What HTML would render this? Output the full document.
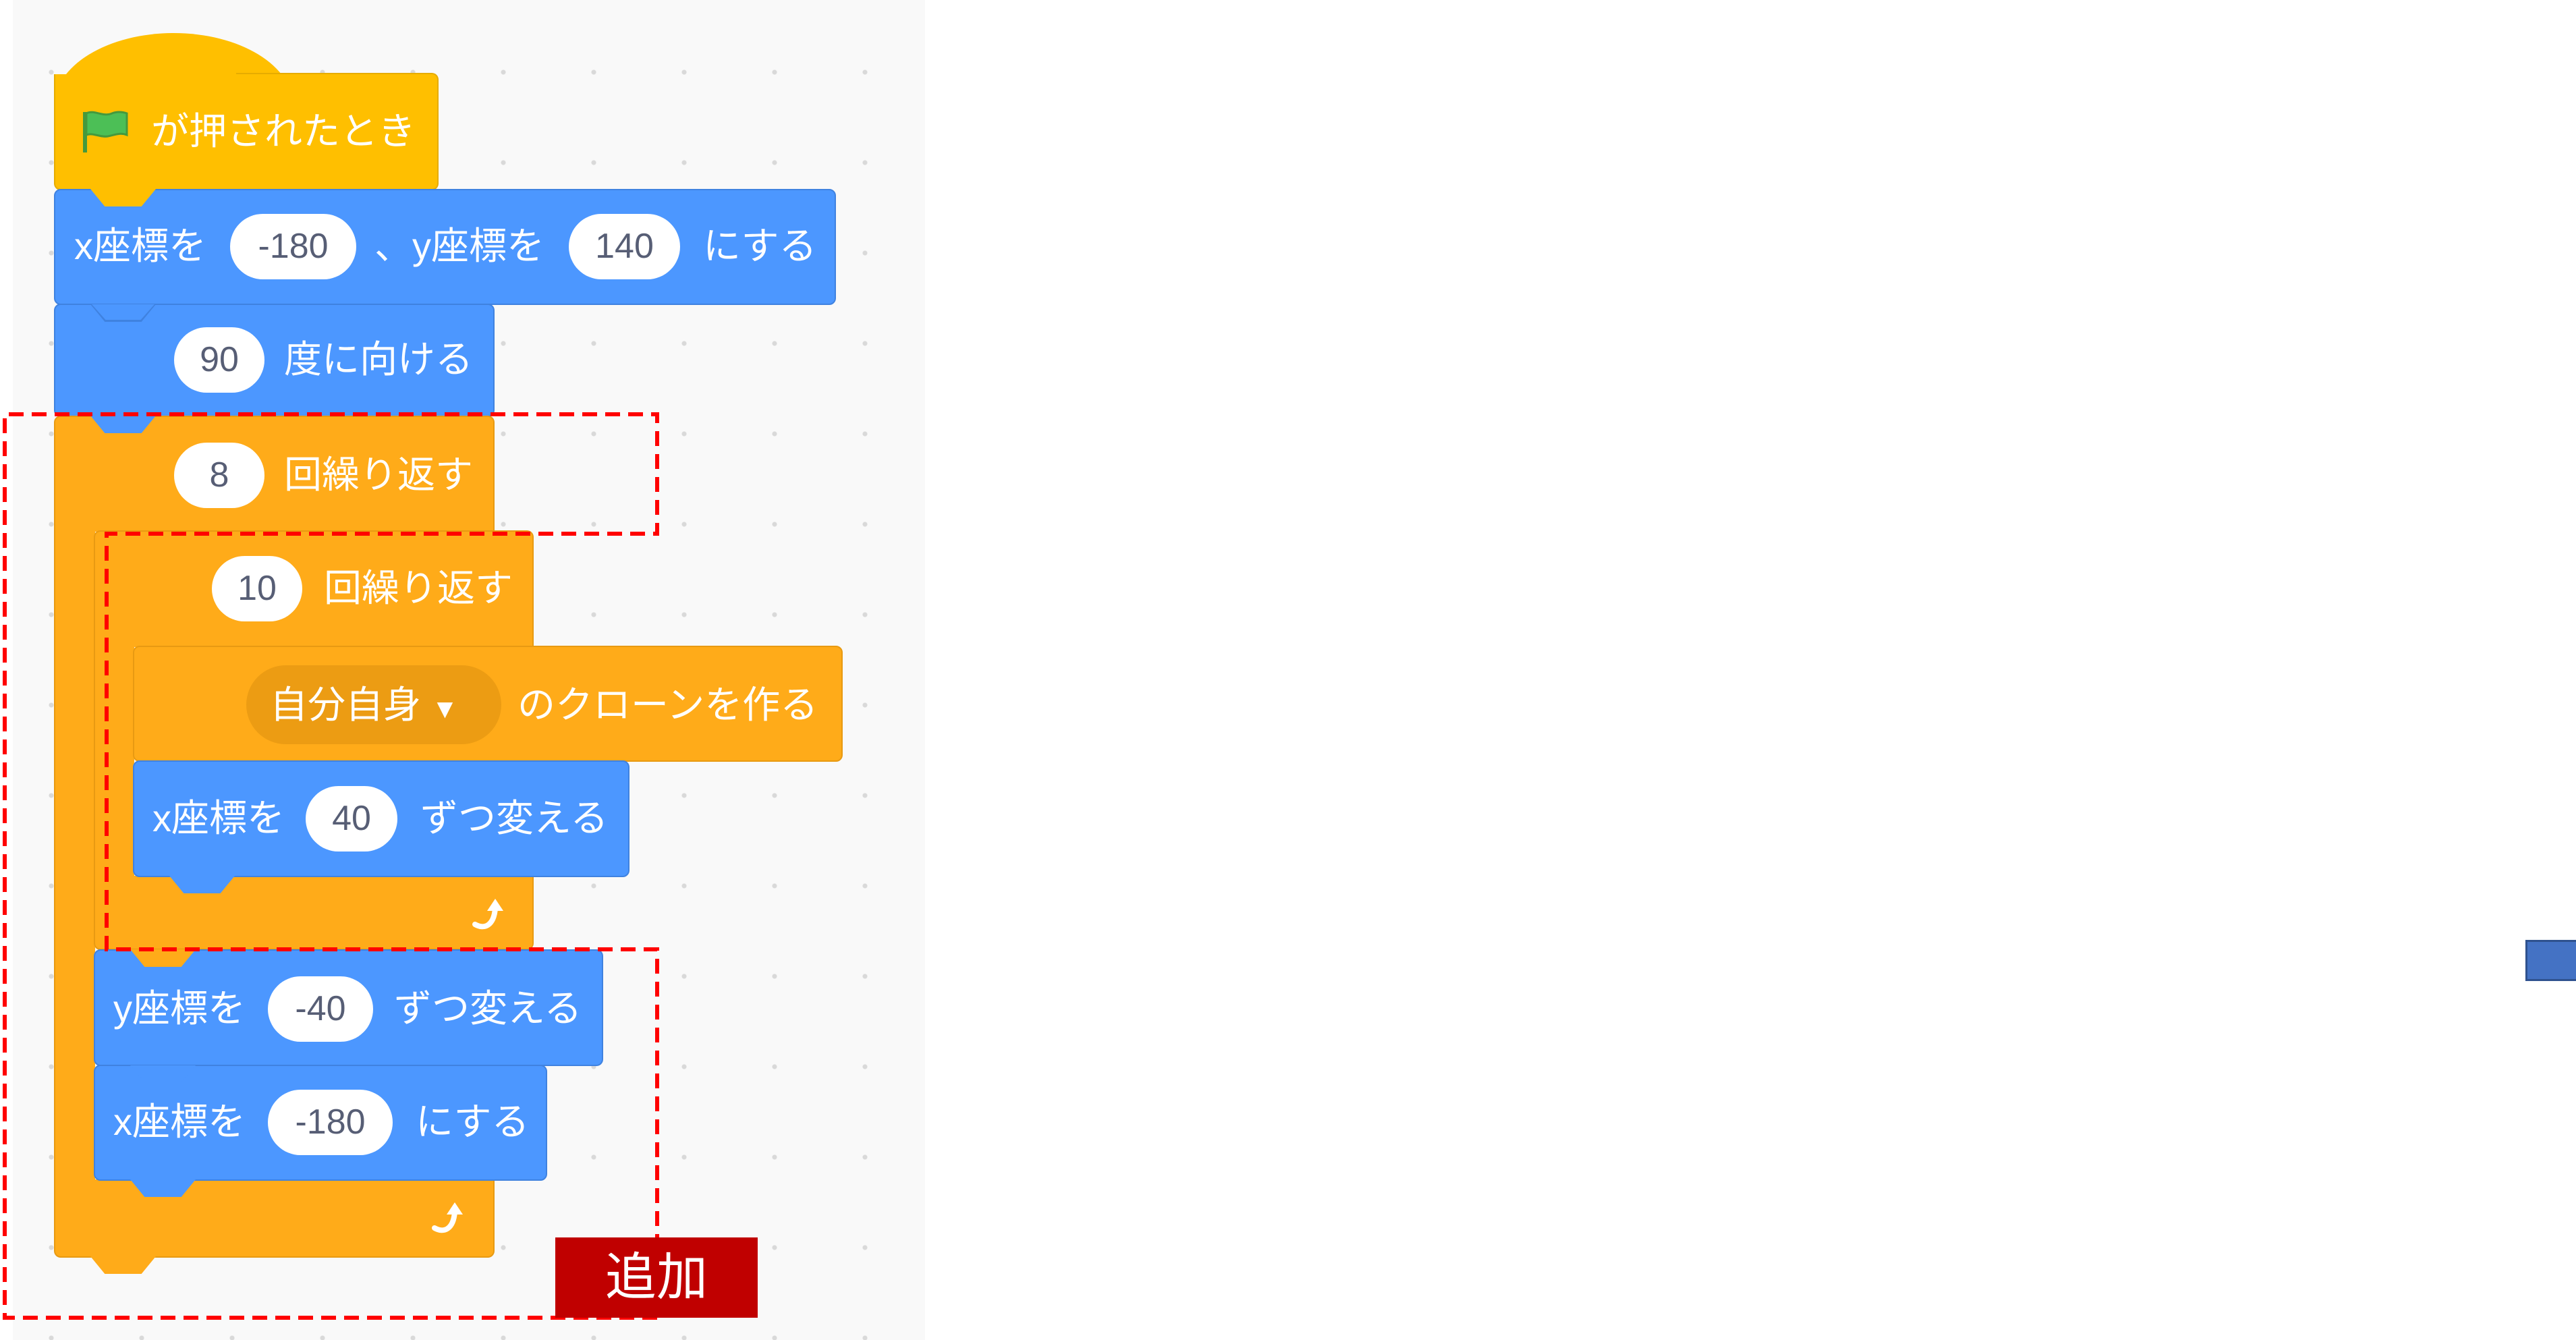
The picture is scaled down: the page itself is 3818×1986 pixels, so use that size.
<!DOCTYPE html>
<html><head><meta charset="utf-8"><style>
*{margin:0;padding:0;box-sizing:border-box}
body{width:3818px;height:1986px;background:#fff;position:relative;overflow:hidden;font-family:"Liberation Sans","Noto Sans CJK JP",sans-serif}
.a{position:absolute}
.panel{left:19px;top:0;width:1352px;height:1986px;background-color:#f9f9f9;background-image:radial-gradient(circle,#d9d9d9 3px,transparent 4px);background-size:134px 134px;background-position:-10px 40px}
.b{position:absolute;border-radius:10px}
.blue{background:#4C97FF;border:2px solid #3F82E0}
.or{background:#FFAB19;border:2px solid #E89A12}
.yel{background:#FFBF00;border:2px solid #E6AC00}
.tab{position:absolute;width:97px;height:26px;clip-path:polygon(0 0,100% 0,78% 100%,22% 100%)}
.t{position:absolute;color:#fff;font-size:56px;line-height:80px;white-space:nowrap}
.p{position:absolute;height:97px;border-radius:50px;background:#fff;color:#575E75;font-size:52px;line-height:97px;text-align:center}
</style></head><body>
<div class="a panel"></div>

<!-- hat -->
<div class="a" style="left:80px;top:49px;width:355px;height:140px;background:#FFBF00;border-radius:180px 180px 0 0 / 110px 110px 0 0"></div>
<div class="b yel" style="left:80px;top:110px;width:570px;height:172px;border-top:none;border-radius:0 10px 10px 10px"></div>
<div class="b yel" style="left:350px;top:108px;width:300px;height:60px;border-bottom:none;border-left:none;border-radius:0 10px 0 0"></div>

<!-- blue set xy -->
<div class="b blue" style="left:80px;top:280px;width:1159px;height:172px"></div>
<div class="tab" style="left:134px;top:280px;background:#FFBF00"></div>
<!-- 90 -->
<div class="b blue" style="left:80px;top:450px;width:653px;height:168px"></div>
<div class="tab" style="left:134px;top:451px;background:#3F82E0;height:26px"></div>
<div class="tab" style="left:136px;top:451px;background:#4C97FF;width:93px;height:23px"></div>

<!-- outer repeat -->
<div class="b or" style="left:80px;top:616px;width:653px;height:172px;border-bottom:none;border-radius:10px 10px 0 0"></div>
<div class="a" style="left:80px;top:780px;width:61px;height:975px;background:#FFAB19;border-left:2px solid #E89A12"></div>
<div class="b or" style="left:80px;top:1748px;width:653px;height:116px;border-top:none;border-radius:0 0 10px 10px"></div>
<div class="tab" style="left:134px;top:1862px;background:#FFAB19"></div>
<div class="tab" style="left:134px;top:616px;background:#4C97FF"></div>

<!-- inner repeat -->
<div class="b or" style="left:139px;top:786px;width:652px;height:173px;border-bottom:none;border-radius:10px 10px 0 0"></div>
<div class="a" style="left:139px;top:950px;width:60px;height:350px;background:#FFAB19;border-left:2px solid #E89A12"></div>
<div class="b or" style="left:139px;top:1298px;width:652px;height:110px;border-top:none;border-radius:0 0 10px 10px"></div>

<!-- clone -->
<div class="b or" style="left:197px;top:957px;width:1052px;height:172px"></div>
<div class="a" style="left:365px;top:986px;width:378px;height:117px;border-radius:60px;background:#EC9C13"></div>

<!-- x change -->
<div class="b blue" style="left:197px;top:1127px;width:736px;height:173px"></div>
<div class="tab" style="left:251px;top:1298px;background:#4C97FF"></div>

<!-- y change -->
<div class="b blue" style="left:139px;top:1407px;width:755px;height:173px"></div>
<div class="tab" style="left:193px;top:1407px;background:#FFAB19"></div>
<!-- x set -->
<div class="b blue" style="left:139px;top:1578px;width:672px;height:172px"></div>
<div class="tab" style="left:193px;top:1579px;background:#4C97FF;height:24px"></div>
<div class="tab" style="left:193px;top:1748px;background:#4C97FF"></div>

<!-- flag -->
<svg class="a" style="left:120px;top:162px" width="72" height="66" viewBox="0 0 72 66"><path d="M6 4 V64" stroke="#45993D" stroke-width="6"/><path d="M8 6 C20 0 32 12 46 6 C54 3 62 4 68 6 V38 C58 34 50 38 40 40 C28 42 18 34 8 38 Z" fill="#4CBF56" stroke="#45993D" stroke-width="3"/></svg>
<div class="t" style="left:224px;top:155px">が押されたとき</div>

<div class="t" style="left:110px;top:325px">x座標を</div>
<div class="p" style="left:341px;top:317px;width:187px">-180</div>
<div class="t" style="left:555px;top:325px">、y座標を</div>
<div class="p" style="left:843px;top:317px;width:165px">140</div>
<div class="t" style="left:1042px;top:325px">にする</div>

<div class="p" style="left:258px;top:485px;width:134px">90</div>
<div class="t" style="left:421px;top:493px">度に向ける</div>

<div class="p" style="left:258px;top:656px;width:134px">8</div>
<div class="t" style="left:421px;top:664px">回繰り返す</div>

<div class="p" style="left:314px;top:824px;width:134px">10</div>
<div class="t" style="left:480px;top:832px">回繰り返す</div>

<div class="t" style="left:400px;top:1005px">自分自身 <span style="font-size:40px">▼</span></div>
<div class="t" style="left:767px;top:1005px">のクローンを作る</div>

<div class="t" style="left:226px;top:1173px">x座標を</div>
<div class="p" style="left:453px;top:1165px;width:136px">40</div>
<div class="t" style="left:623px;top:1173px">ずつ変える</div>

<svg class="a" style="left:696px;top:1326px" width="60" height="60" viewBox="0 0 60 60"><path d="M8 44 C22 52 36 46 38 20" fill="none" stroke="#fff" stroke-width="8" stroke-linecap="round"/><path d="M26 24 L38 6 L50 24 Z" fill="#fff"/></svg>

<div class="t" style="left:168px;top:1455px">y座標を</div>
<div class="p" style="left:397px;top:1447px;width:156px">-40</div>
<div class="t" style="left:584px;top:1455px">ずつ変える</div>

<div class="t" style="left:168px;top:1623px">x座標を</div>
<div class="p" style="left:397px;top:1615px;width:185px">-180</div>
<div class="t" style="left:616px;top:1623px">にする</div>

<svg class="a" style="left:636px;top:1776px" width="60" height="60" viewBox="0 0 60 60"><path d="M8 44 C22 52 36 46 38 20" fill="none" stroke="#fff" stroke-width="8" stroke-linecap="round"/><path d="M26 24 L38 6 L50 24 Z" fill="#fff"/></svg>

<!-- dashed outline -->
<svg class="a" style="left:0;top:0" width="3818" height="1986"><path d="M974 1953 H7 V614 H974 V791 H158 V1407 H974 V1953" fill="none" stroke="#FF0000" stroke-width="6" stroke-dasharray="22 12"/></svg>

<div class="a" style="left:823px;top:1834px;width:300px;height:119px;background:#C00000;color:#fff;font-size:76px;line-height:119px;text-align:center">追加</div>

<div class="a" style="left:3743px;top:1393px;width:80px;height:61px;background:#4472C4;border:3px solid #2F528F"></div>
</body></html>
